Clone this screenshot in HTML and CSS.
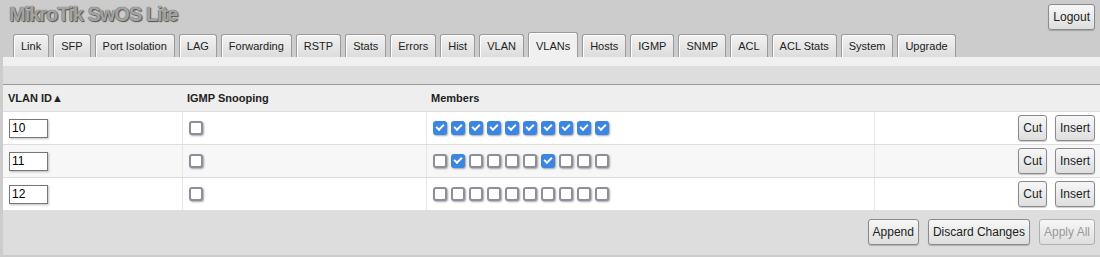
FILE: index.html
```html
<!DOCTYPE html>
<html lang="en">
<head>
  <meta charset="UTF-8" />
  <meta name="viewport" content="width=device-width, initial-scale=1.0"/>
  <title>MikroTik SwOS Lite</title>
  <link rel="stylesheet" href="styles.css">
</head>
<body>
  <div class="top">
    <h1>MikroTik SwOS Lite</h1>
    <button class="btn">Logout</button>
  </div>

  <div class="tabs">
    <a class="tab">Link</a>
    <a class="tab">SFP</a>
    <a class="tab">Port Isolation</a>
    <a class="tab">LAG</a>
    <a class="tab">Forwarding</a>
    <a class="tab">RSTP</a>
    <a class="tab">Stats</a>
    <a class="tab">Errors</a>
    <a class="tab">Hist</a>
    <a class="tab">VLAN</a>
    <a class="tab active">VLANs</a>
    <a class="tab">Hosts</a>
    <a class="tab">IGMP</a>
    <a class="tab">SNMP</a>
    <a class="tab">ACL</a>
    <a class="tab">ACL Stats</a>
    <a class="tab">System</a>
    <a class="tab">Upgrade</a>
  </div>

  <div class="panel">
    <div class="band"></div>
    <div class="toolbar"></div>
    <table class="grid">
      <thead>
        <tr>
          <th class="c1">VLAN ID&#9650;</th>
          <th class="c2">IGMP Snooping</th>
          <th class="c3">Members</th>
          <th class="c4"></th>
        </tr>
      </thead>
      <tbody>
        <tr>
          <td><input class="num" type="text" value="10"></td>
          <td><input class="cb" type="checkbox"></td>
          <td>
            <input class="cb" type="checkbox" checked><input class="cb" type="checkbox" checked><input class="cb" type="checkbox" checked><input class="cb" type="checkbox" checked><input class="cb" type="checkbox" checked><input class="cb" type="checkbox" checked><input class="cb" type="checkbox" checked><input class="cb" type="checkbox" checked><input class="cb" type="checkbox" checked><input class="cb" type="checkbox" checked>
          </td>
          <td class="ops"><button class="btn">Cut</button><button class="btn">Insert</button></td>
        </tr>
        <tr>
          <td><input class="num" type="text" value="11"></td>
          <td><input class="cb" type="checkbox"></td>
          <td>
            <input class="cb" type="checkbox"><input class="cb" type="checkbox" checked><input class="cb" type="checkbox"><input class="cb" type="checkbox"><input class="cb" type="checkbox"><input class="cb" type="checkbox"><input class="cb" type="checkbox" checked><input class="cb" type="checkbox"><input class="cb" type="checkbox"><input class="cb" type="checkbox">
          </td>
          <td class="ops"><button class="btn">Cut</button><button class="btn">Insert</button></td>
        </tr>
        <tr>
          <td><input class="num" type="text" value="12"></td>
          <td><input class="cb" type="checkbox"></td>
          <td>
            <input class="cb" type="checkbox"><input class="cb" type="checkbox"><input class="cb" type="checkbox"><input class="cb" type="checkbox"><input class="cb" type="checkbox"><input class="cb" type="checkbox"><input class="cb" type="checkbox"><input class="cb" type="checkbox"><input class="cb" type="checkbox"><input class="cb" type="checkbox">
          </td>
          <td class="ops"><button class="btn">Cut</button><button class="btn">Insert</button></td>
        </tr>
      </tbody>
    </table>
    <div class="actions">
      <button class="btn">Append</button>
      <button class="btn">Discard Changes</button>
      <button class="btn" disabled>Apply All</button>
    </div>
  </div>
</body>
</html>
```

FILE: styles.css
```css
body {
  font-family: "Liberation Sans", Arial, sans-serif;
  font-size: 11px;
  color: #222;
  background: #ccc;
  margin: 0;
  overflow: hidden;
}
.top {
  display: flex;
  justify-content: space-between;
  align-items: flex-start;
  padding: 4px 5px 0 9px;
  height: 26px;
}
h1 {
  margin: 0;
  margin-top: -2px;
  font-size: 20px;
  line-height: 24px;
  letter-spacing: -1px;
  color: #a3a3a3;
  text-shadow: 0 0 1px #444, 1px 1px 1px #555;
}
.btn {
  font-family: "Liberation Sans", Arial, sans-serif;
  font-size: 12px;
  color: #222;
  height: 26px;
  padding: 0 4px;
  border: 1px solid #8a8a8a;
  border-radius: 3px;
  background: linear-gradient(#f7f7f7, #dedede);
  box-shadow: 0 1px 1px rgba(0,0,0,0.2);
}
.btn:disabled {
  color: #999;
  border-color: #b0b0b0;
  box-shadow: none;
}
.tabs {
  display: flex;
  align-items: flex-end;
  gap: 4px;
  padding-left: 13px;
  margin-top: 2px;
  height: 25px;
}
.tab {
  display: block;
  height: 22px;
  line-height: 22px;
  padding: 0 7px;
  border: 1px solid #9a9a9a;
  border-bottom: none;
  border-radius: 3px 3px 0 0;
  background: linear-gradient(#f2f2f2, #dcdcdc);
  box-shadow: inset 1px 1px 0 #fff;
}
.tab.active {
  height: 24px;
  line-height: 26px;
  background: #f0f0f0;
}
.panel {
  margin-left: 3px;
  background: #ddd;
  padding-bottom: 10px;
}
.band {
  height: 9px;
  background: #f0f0f0;
}
.toolbar {
  height: 18px;
  border-bottom: 1px solid #999;
}
.grid {
  width: 100%;
  border-collapse: collapse;
  table-layout: fixed;
}
.grid th {
  height: 26px;
  padding: 0 5px;
  text-align: left;
  font-weight: bold;
  background: #eee;
  border-bottom: 1px solid #ddd;
}
.grid td {
  height: 32px;
  padding: 0 5px;
  background: #fff;
  border-bottom: 1px solid #ddd;
  border-left: 1px solid #e6e6e6;
  white-space: nowrap;
}
.grid td:first-child {
  border-left: none;
}
.grid tbody tr:nth-child(even) td {
  background: #f7f7f7;
}
.c1 { width: 169px; }
.c2 { width: 234px; }
.c3 { width: 438px; }
.num {
  width: 39px;
  height: 19px;
  box-sizing: border-box;
  margin: 0 0 0 1px;
  padding: 0 2px;
  font-family: "Liberation Sans", Arial, sans-serif;
  font-size: 12px;
  border: 1px solid #777;
  box-shadow: 1px 1px 2px rgba(0,0,0,0.25);
  vertical-align: middle;
}
.cb {
  appearance: none;
  -webkit-appearance: none;
  position: relative;
  width: 14px;
  height: 14px;
  margin: 0 3px 0 1px;
  border: 2px solid #8f8c9b;
  border-radius: 3px;
  background: #fff;
  box-shadow: 1px 1px 2px rgba(0,0,0,0.35);
  vertical-align: middle;
}
.cb:checked {
  background: #3a86e2;
  border-color: #3a86e2;
}
.cb:checked::after {
  content: "";
  position: absolute;
  left: 1px;
  top: 1px;
  width: 6px;
  height: 3px;
  border: solid #fff;
  border-width: 0 0 2px 2px;
  transform: rotate(-45deg);
}
.ops {
  text-align: right;
}
.ops .btn {
  margin-left: 8px;
}
.actions {
  display: flex;
  justify-content: flex-end;
  gap: 9px;
  padding: 8px 5px 0 0;
}
```
